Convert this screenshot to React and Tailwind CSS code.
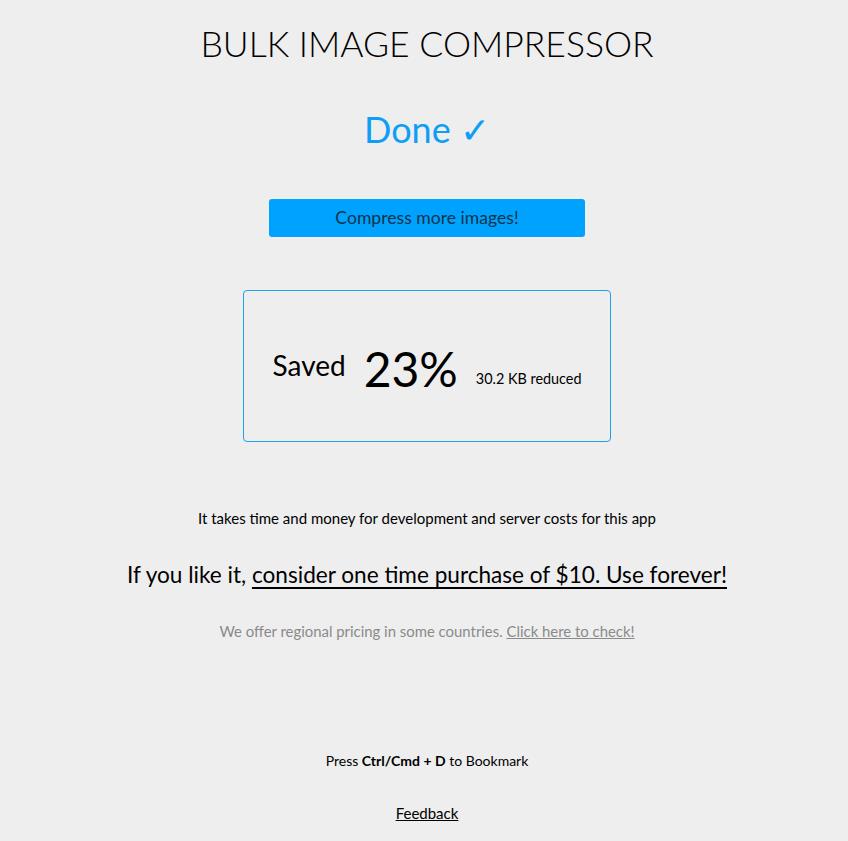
import React from "react";

const App = () => {
  return (
    <div className="min-h-[841px] bg-[#eeeeee] text-black font-['Lato','Noto_Sans',sans-serif] flex flex-col items-center pl-[6px]">
      <h1 className="mt-[22px] text-[35.5px] font-light leading-[44px]">
        BULK IMAGE COMPRESSOR
      </h1>

      <div className="mt-[41px] text-[36px] leading-[44px] text-[#0f9ef5]">
        Done <span className="font-light">✓</span>
      </div>

      <button className="mt-[48px] w-[316px] h-[38px] rounded-[3px] bg-[#00a2ff] text-[17.6px] text-[#10344a]">
        Compress more images!
      </button>

      {/* result card */}
      <div className="mt-[53px] w-[368px] h-[152px] rounded-[4px] border border-[#1e9ff0] flex items-center justify-center gap-[18px] pt-[6px]">
        <span className="text-[28px] leading-none mt-[-8px]">Saved</span>
        <span className="text-[48px] leading-none">23%</span>
        <span className="text-[14.4px] leading-none mt-[21px]">30.2 KB reduced</span>
      </div>

      <p className="mt-[66px] text-[15px] leading-[20px]">
        It takes time and money for development and server costs for this app
      </p>

      <p className="mt-[33px] text-[22.6px] leading-[28px]">
        If you like it, <a href="#" className="underline underline-offset-[4px]">consider one time purchase of $10. Use forever!</a>
      </p>

      <p className="mt-[32px] text-[14.9px] leading-[20px] text-[#8a8a8a]">
        We offer regional pricing in some countries. <a href="#" className="underline">Click here to check!</a>
      </p>

      <p className="mt-[110px] text-[14px] leading-[20px]">
        Press <b>Ctrl/Cmd + D</b> to Bookmark
      </p>

      <a href="#" className="mt-[32px] text-[15px] leading-[20px] underline">
        Feedback
      </a>
    </div>
  );
};

export default App;
